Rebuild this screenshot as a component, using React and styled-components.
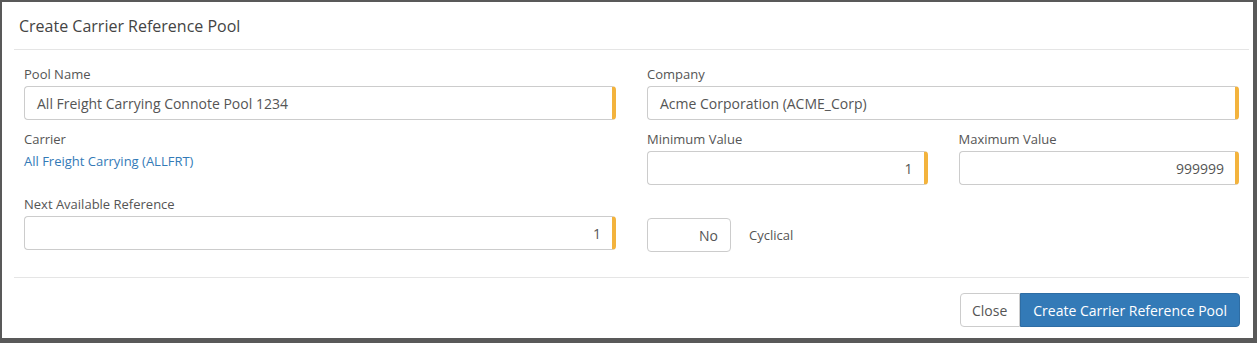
import styled, { createGlobalStyle } from 'styled-components';

const GlobalStyle = createGlobalStyle`
  html, body {
    margin: 0;
    padding: 0;
    background: #ffffff;
  }

  body {
    font-family: "Open Sans", "Liberation Sans", Arial, sans-serif;
    color: #555555;
  }
`;

const Frame = styled.div`
  box-sizing: border-box;
  width: 1257px;
  height: 343px;
  border-style: solid;
  border-color: #595959;
  border-width: 2px 4px 5px 2px;
  background: #ffffff;
  display: flex;
  flex-direction: column;
`;

const Header = styled.div`
  margin: 0 4px 0 12px;
  height: 48px;
  border-bottom: 1px solid #e5e5e5;
  display: flex;
  align-items: center;
  padding-left: 5px;
  box-sizing: border-box;
`;

const Title = styled.h4`
  margin: 0;
  font-size: 16px;
  font-weight: 400;
  color: #444444;
`;

const Body = styled.div`
  padding: 15px 14px 0 22px;
  display: grid;
  grid-template-columns: 1fr 1fr;
  align-content: start;
  column-gap: 31px;
  row-gap: 10px;
  height: 227px;
  box-sizing: border-box;
`;

const Field = styled.div`
  display: flex;
  flex-direction: column;
`;

const Label = styled.label`
  font-size: 13px;
  line-height: 18px;
  height: 18px;
  color: #555555;
  margin-bottom: 3px;
`;

const Input = styled.div`
  box-sizing: border-box;
  height: 34px;
  border: 1px solid #cccccc;
  border-right: 4px solid ${props => (props.$required ? '#f3b33d' : '#cccccc')};
  border-radius: 4px;
  padding: 0 ${props => (props.$align === 'right' ? '11px' : '12px')};
  font-size: 14px;
  color: #555555;
  display: flex;
  align-items: center;
  justify-content: ${props => (props.$align === 'right' ? 'flex-end' : 'flex-start')};
`;

const Link = styled.a`
  font-size: 13px;
  line-height: 18px;
  color: #337ab7;
  text-decoration: none;
  margin-top: 1px;
`;

const Pair = styled.div`
  display: grid;
  grid-template-columns: 1fr 1fr;
  column-gap: 31px;
`;

const ToggleRow = styled.div`
  display: flex;
  align-items: center;
  gap: 18px;
  padding-top: 23px;
`;

const Toggle = styled.div`
  box-sizing: border-box;
  width: 84px;
  height: 34px;
  border: 1px solid #cccccc;
  border-radius: 4px;
  padding: 0 12px;
  font-size: 14px;
  color: #555555;
  display: flex;
  align-items: center;
  justify-content: flex-end;
`;

const ToggleLabel = styled.span`
  font-size: 13px;
  color: #555555;
`;

const Footer = styled.div`
  margin: 0 4px 0 12px;
  border-top: 1px solid #e5e5e5;
  padding: 15px 9px 0 0;
  display: flex;
  justify-content: flex-end;
`;

const Button = styled.button`
  box-sizing: border-box;
  height: 34px;
  padding: ${props => (props.$primary ? '0 12px' : '0 12px 0 11px')};
  font-family: inherit;
  font-size: 14px;
  border: 1px solid ${props => (props.$primary ? '#2e6da4' : '#cccccc')};
  background: ${props => (props.$primary ? '#337ab7' : '#ffffff')};
  color: ${props => (props.$primary ? '#ffffff' : '#555555')};
  border-radius: ${props => (props.$primary ? '0 4px 4px 0' : '4px 0 0 4px')};
  cursor: pointer;
`;

const App = () => {
  return (
    <>
      <GlobalStyle />
      <Frame>
        <Header>
          <Title>Create Carrier Reference Pool</Title>
        </Header>
        <Body>
          <Field>
            <Label>Pool Name</Label>
            <Input $required>All Freight Carrying Connote Pool 1234</Input>
          </Field>
          <Field>
            <Label>Company</Label>
            <Input $required>Acme Corporation (ACME_Corp)</Input>
          </Field>

          <Field>
            <Label>Carrier</Label>
            <Link href="#">All Freight Carrying (ALLFRT)</Link>
          </Field>
          <Pair>
            <Field>
              <Label>Minimum Value</Label>
              <Input $required $align="right">1</Input>
            </Field>
            <Field>
              <Label>Maximum Value</Label>
              <Input $required $align="right">999999</Input>
            </Field>
          </Pair>

          <Field>
            <Label>Next Available Reference</Label>
            <Input $required $align="right">1</Input>
          </Field>
          <ToggleRow>
            <Toggle>No</Toggle>
            <ToggleLabel>Cyclical</ToggleLabel>
          </ToggleRow>
        </Body>
        <Footer>
          <Button>Close</Button>
          <Button $primary>Create Carrier Reference Pool</Button>
        </Footer>
      </Frame>
    </>
  );
};

export default App;
